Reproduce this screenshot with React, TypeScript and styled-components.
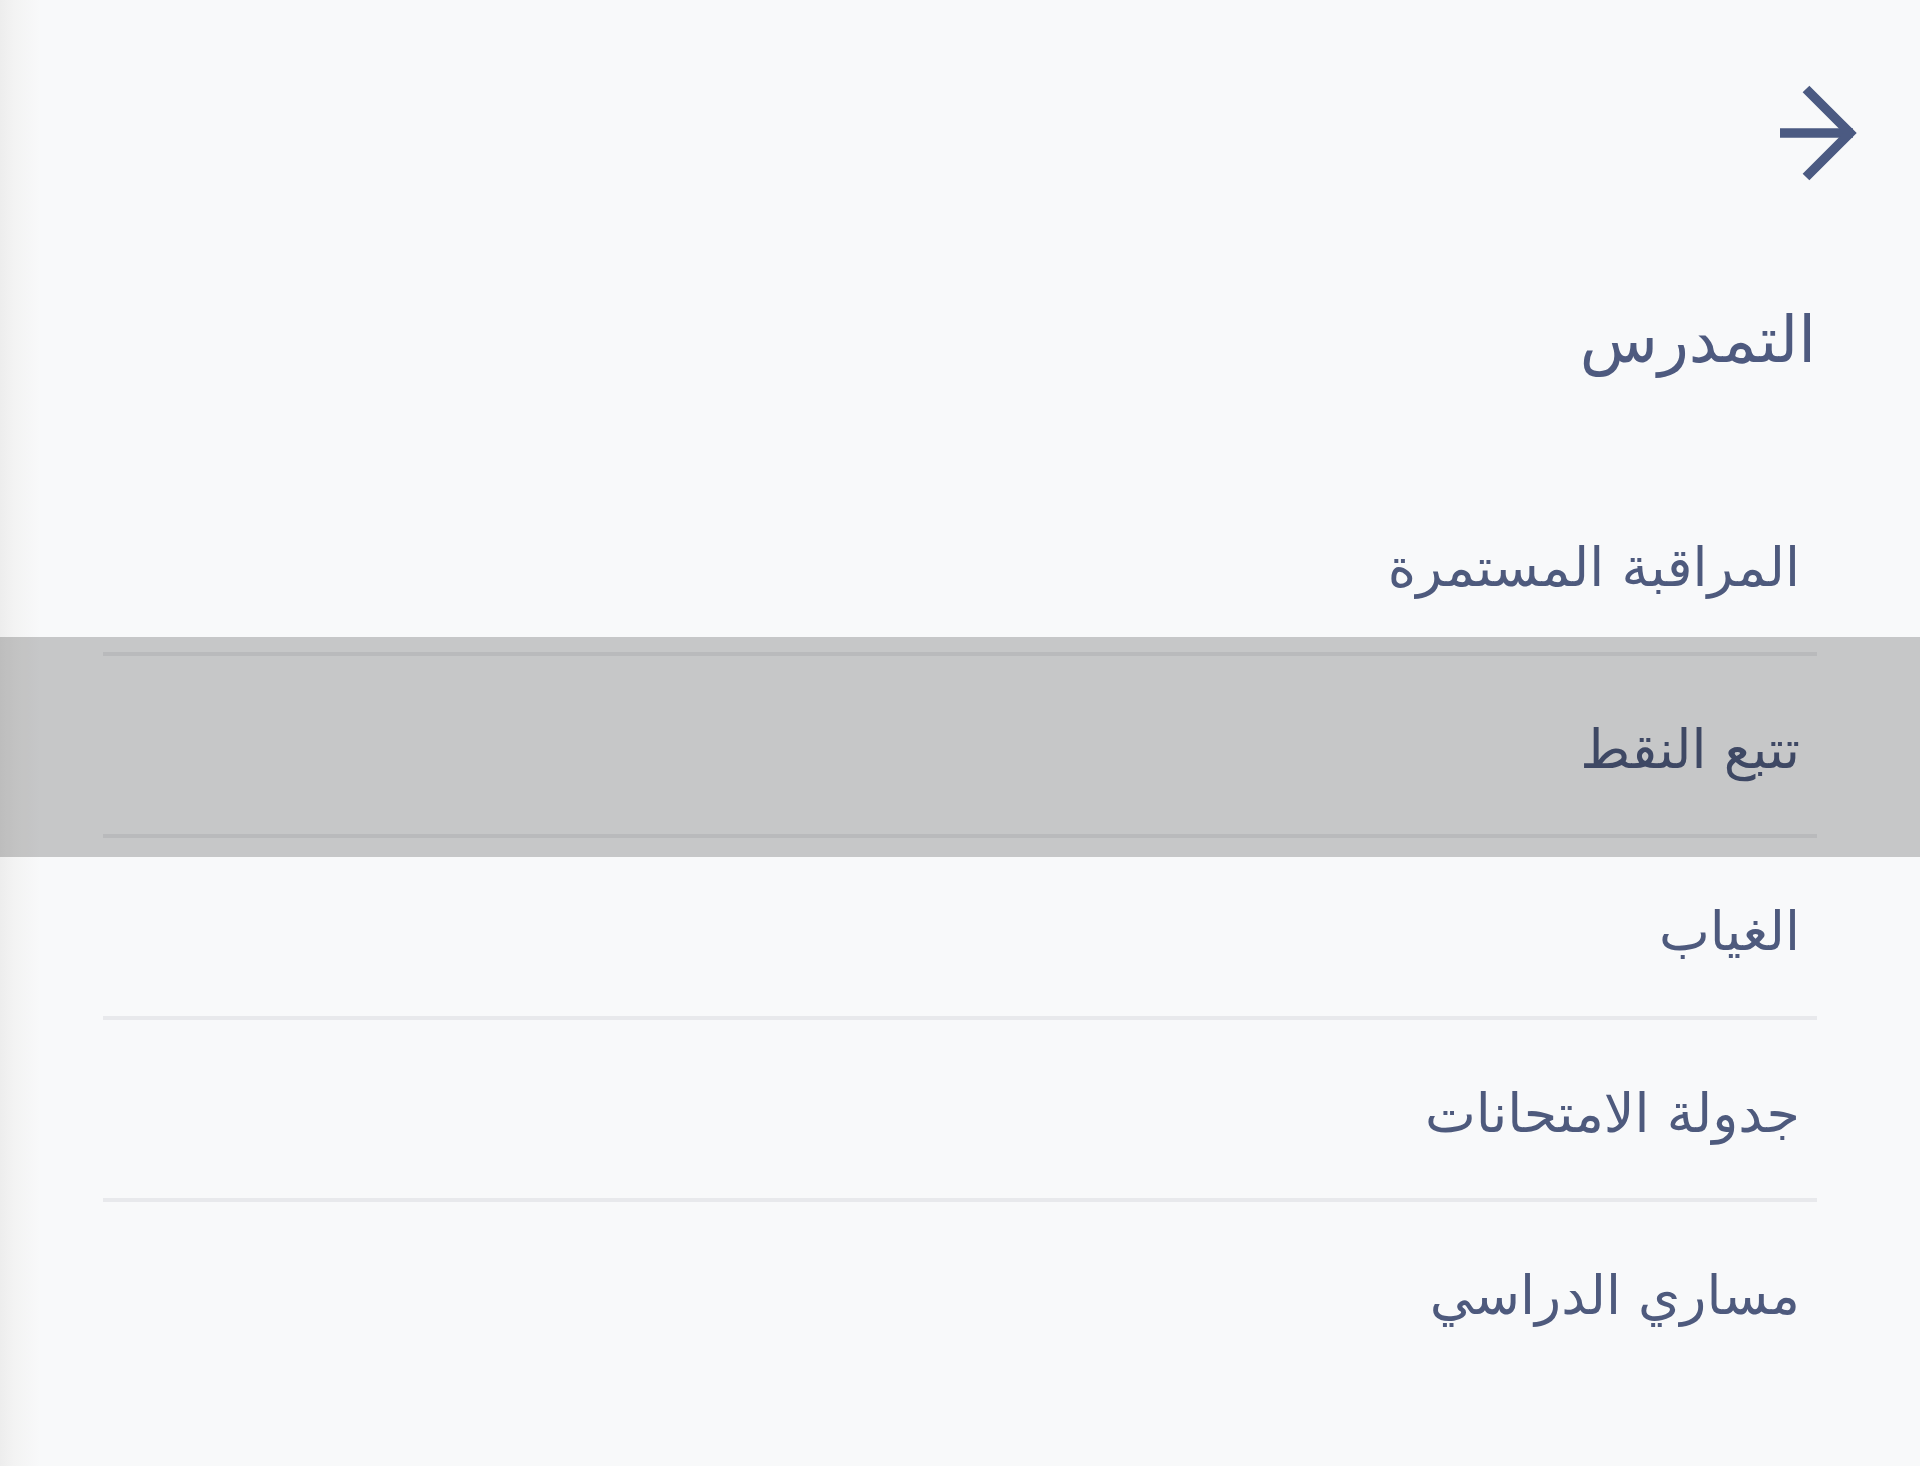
import React from "react";
import styled, { createGlobalStyle, css } from "styled-components";

const GlobalStyle = createGlobalStyle`
  html, body {
    margin: 0;
    padding: 0;
  }
  body {
    background: #f8f9fa;
    font-family: "DejaVu Sans", "Noto Sans", sans-serif;
  }
`;

const Drawer = styled.div`
  min-height: 1466px;
  box-sizing: border-box;
  padding-top: 83px;
  background: linear-gradient(to right, #ededed 0, #f3f3f3 14px, #f8f9fa 40px);
  direction: rtl;
  overflow: hidden;
`;

const Header = styled.div`
  display: flex;
  justify-content: flex-start;
  padding-right: 57px;
  height: 100px;
`;

const BackButton = styled.button`
  border: 0;
  padding: 0;
  background: none;
  width: 90px;
  height: 100px;
  cursor: pointer;
  color: #4b5a82;
`;

const Title = styled.h1`
  margin: 122px 0 0;
  padding-right: 104px;
  font-size: 64px;
  line-height: 70px;
  font-weight: normal;
  color: #4e5a7f;
`;

const List = styled.ul`
  list-style: none;
  margin: 99px 0 0;
  padding: 0;
`;

const Row = styled.li<{ $active?: boolean }>`
  position: relative;
  padding: 0 103px;

  ${(p) =>
    p.$active &&
    css`
      &::after {
        content: "";
        position: absolute;
        top: -19px;
        bottom: -19px;
        left: 0;
        right: 0;
        background: rgba(0, 0, 0, 0.2);
        pointer-events: none;
      }
    `}
`;

const Cell = styled.div<{ $last?: boolean }>`
  display: flex;
  align-items: center;
  height: 168px;
  box-sizing: content-box;
  padding: 10px 17px 0 0;
  border-bottom: ${(p) => (p.$last ? "none" : "4px solid #e8e9ec")};
  font-size: 54px;
  line-height: 60px;
  color: #4e5a7d;
`;

const ArrowIcon = () => (
  <svg width="90" height="100" viewBox="0 0 90 100" fill="none">
    <path d="M7 50H80" stroke="currentColor" strokeWidth="9.5" />
    <path
      d="M33 6L77 50L33 94"
      stroke="currentColor"
      strokeWidth="9.5"
      strokeLinejoin="miter"
    />
  </svg>
);

const items = [
  "المراقبة المستمرة",
  "تتبع النقط",
  "الغياب",
  "جدولة الامتحانات",
  "مساري الدراسي",
];

const App = () => {
  return (
    <>
      <GlobalStyle />
      <Drawer>
        <Header>
          <BackButton aria-label="رجوع">
            <ArrowIcon />
          </BackButton>
        </Header>
        <Title>التمدرس</Title>
        <List>
          {items.map((label, i) => (
            <Row key={label} $active={i === 1}>
              <Cell $last={i === items.length - 1}>{label}</Cell>
            </Row>
          ))}
        </List>
      </Drawer>
    </>
  );
};

export default App;
